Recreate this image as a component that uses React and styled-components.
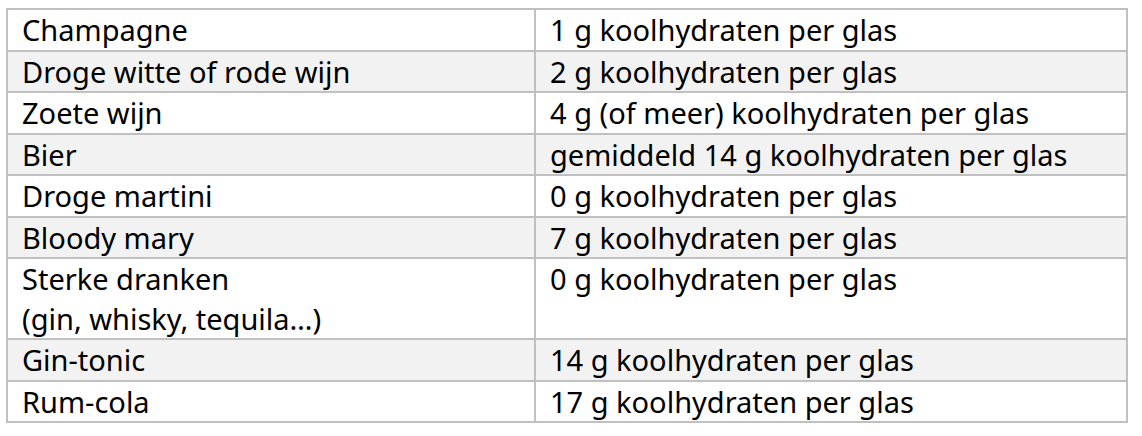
import React from "react";
import styled, { createGlobalStyle } from "styled-components";

const Global = createGlobalStyle`
  body {
    margin: 0;
    background: #ffffff;
    font-family: "Noto Sans", "Open Sans", sans-serif;
  }
`;

const Table = styled.table`
  margin: 8px 0 0 6px;
  width: 1122px;
  border-collapse: collapse;
  border: 2px solid #c0c0c0;
  table-layout: fixed;
  font-family: "Noto Sans", "Open Sans", sans-serif;
  font-size: 29px;
  color: #000000;
`;

const Row = styled.tr`
  background: ${(p) => (p.$shaded ? "#f2f2f2" : "#ffffff")};
`;

const Cell = styled.td`
  border: 2px solid #c0c0c0;
  padding: 0 14px;
  line-height: 39.5px;
  vertical-align: top;
  white-space: nowrap;
`;

const rows = [
  ["Champagne", "1 g koolhydraten per glas"],
  ["Droge witte of rode wijn", "2 g koolhydraten per glas"],
  ["Zoete wijn", "4 g (of meer) koolhydraten per glas"],
  ["Bier", "gemiddeld 14 g koolhydraten per glas"],
  ["Droge martini", "0 g koolhydraten per glas"],
  ["Bloody mary", "7 g koolhydraten per glas"],
  [["Sterke dranken", "(gin, whisky, tequila…)"], "0 g koolhydraten per glas"],
  ["Gin-tonic", "14 g koolhydraten per glas"],
  ["Rum-cola", "17 g koolhydraten per glas"],
];

export default function App() {
  return (
    <>
      <Global />
      <Table>
        <colgroup>
          <col style={{ width: "528px" }} />
          <col />
        </colgroup>
        <tbody>
          {rows.map(([a, b], i) => (
            <Row key={i} $shaded={i % 2 === 1}>
              <Cell>
                {Array.isArray(a)
                  ? a.map((l, j) => (
                      <React.Fragment key={j}>
                        {j > 0 && <br />}
                        {l}
                      </React.Fragment>
                    ))
                  : a}
              </Cell>
              <Cell>{b}</Cell>
            </Row>
          ))}
        </tbody>
      </Table>
    </>
  );
}
